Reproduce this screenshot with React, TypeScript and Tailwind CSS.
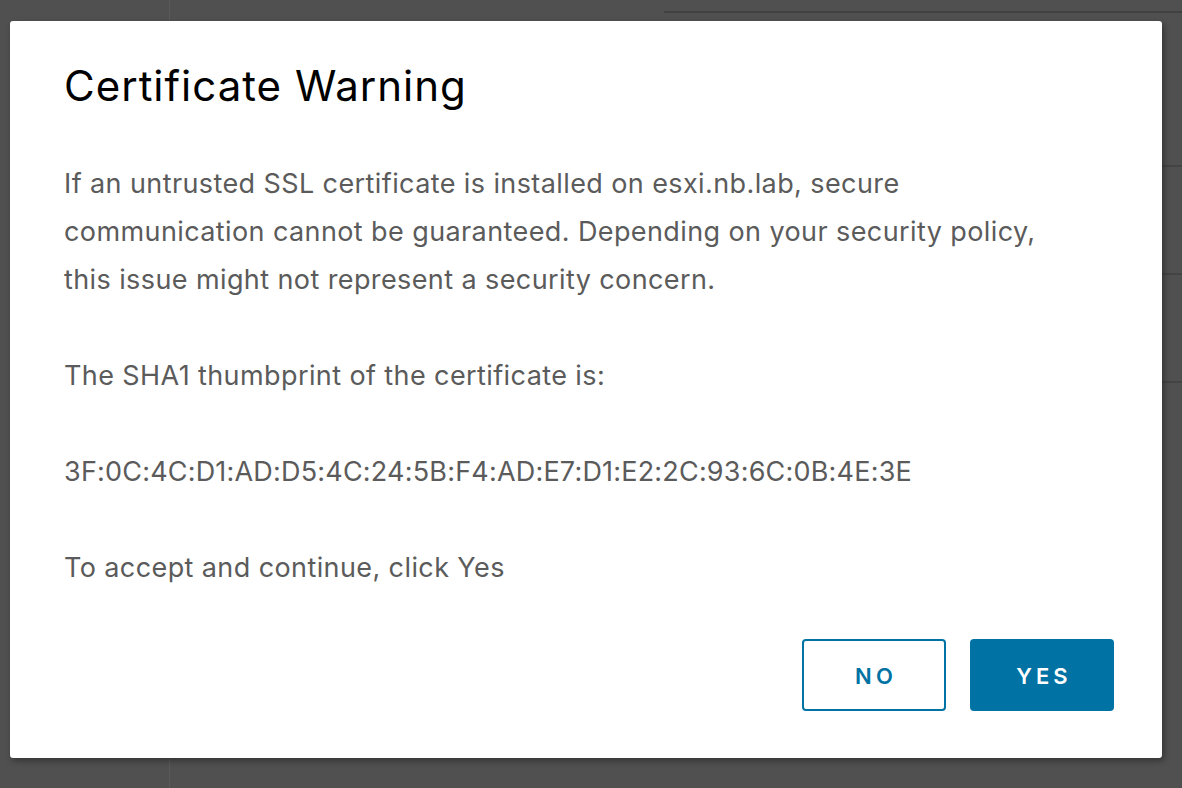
import React from 'react';

const font = { fontFamily: 'Inter, "Open Sans", sans-serif' };

const CertificateWarning: React.FC = () => {
  return (
    <div className="relative w-full h-screen overflow-hidden bg-[#505050]" style={font}>
      {/* page underneath the overlay */}
      <div className="flex h-full">
        <div className="w-[170px] border-r border-[#5a5a5a]" />
        <div className="flex-1 flex flex-col">
          <div className="flex h-[13px]">
            <div className="w-[494px]" />
            <div className="flex-1 border-b-2 border-[#414141]" />
          </div>
          <div className="h-[154px] border-b-2 border-[#444444]" />
          <div className="h-[108px] border-b-2 border-[#444444]" />
          <div className="h-[108px] border-b-2 border-[#444444]" />
        </div>
      </div>

      {/* dialog */}
      <div className="absolute left-[10px] top-[21px] w-[1152px] h-[737px] bg-white rounded-[3px] shadow-[2px_3px_6px_rgba(0,0,0,0.35)] px-[54px] pt-[37px] flex flex-col">
        <h1 className="text-[42px] leading-[56px] text-black font-normal tracking-[1px]">Certificate Warning</h1>
        <div className="mt-[46px] text-[27px] leading-[48px] text-[#5b5b5b] tracking-[0.4px]">
          <p>
            If an untrusted SSL certificate is installed on esxi.nb.lab, secure
            <br />
            communication cannot be guaranteed. Depending on your security policy,
            <br />
            this issue might not represent a security concern.
          </p>
          <p className="mt-[48px]">The SHA1 thumbprint of the certificate is:</p>
          <p className="mt-[48px] tracking-[0.2px]">3F:0C:4C:D1:AD:D5:4C:24:5B:F4:AD:E7:D1:E2:2C:93:6C:0B:4E:3E</p>
          <p className="mt-[48px]">To accept and continue, click Yes</p>
        </div>
        <div className="mt-auto mb-[47px] -mr-[6px] flex justify-end gap-[24px]">
          <button className="w-[144px] h-[72px] rounded-[4px] border-2 border-[#0072a3] bg-white text-[#0072a3] text-[22px] font-semibold tracking-[0.2em] pl-[0.2em] pt-[3px]">
            NO
          </button>
          <button className="w-[144px] h-[72px] rounded-[4px] bg-[#0072a3] text-white text-[22px] font-semibold tracking-[0.18em] pl-[0.18em] pt-[3px]">
            YES
          </button>
        </div>
      </div>
    </div>
  );
};

export default function App() {
  return <CertificateWarning />;
}
